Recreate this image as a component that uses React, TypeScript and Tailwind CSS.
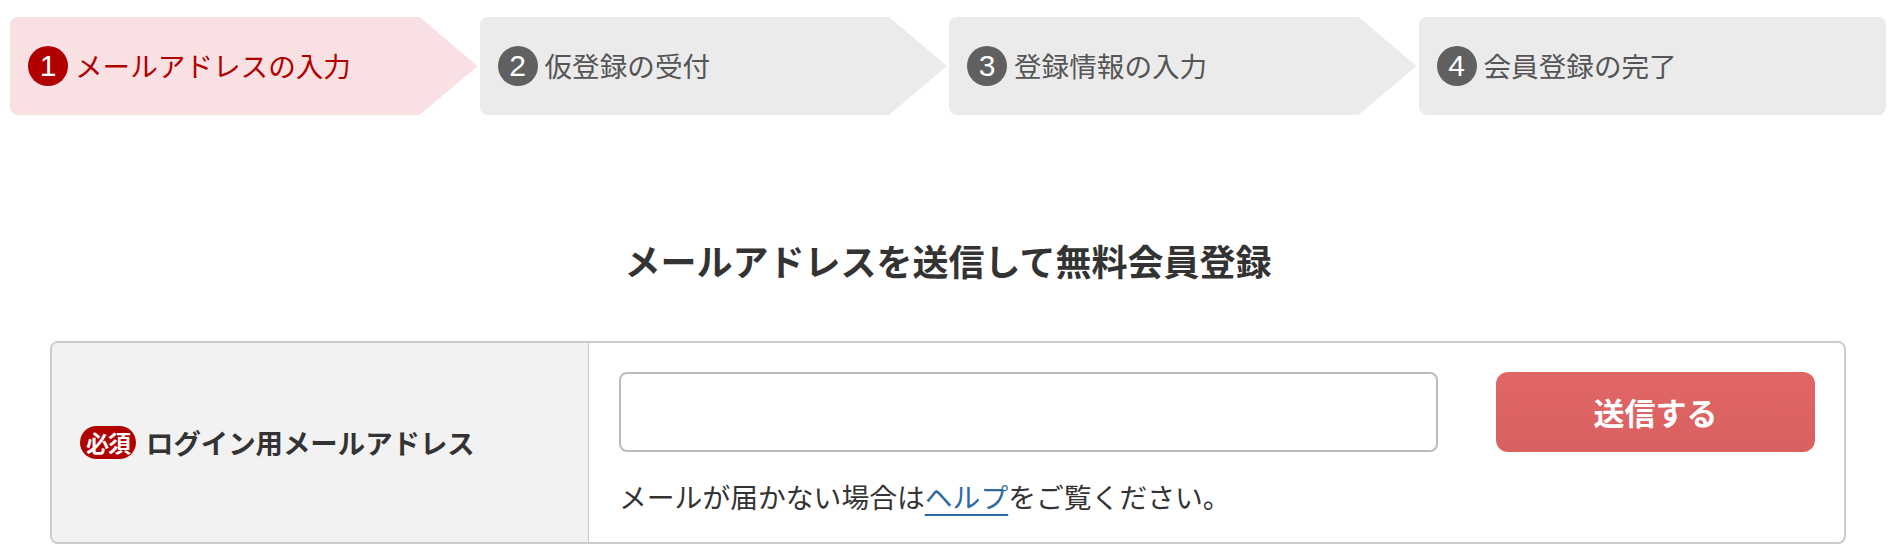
import React from "react";

const font = { fontFamily: '"Noto Sans CJK JP", "Noto Sans", sans-serif' };

function Step({ n, label, active, last }: { n: number; label: string; active?: boolean; last?: boolean }) {
  const bg = active ? "bg-[#f9e0e2]" : "bg-[#ebebeb]";
  const text = active ? "text-[#b00000]" : "text-[#555555]";
  const circle = active ? "bg-[#b00000]" : "bg-[#606060]";
  const shape = last
    ? "rounded-[8px]"
    : "rounded-l-[8px] [clip-path:polygon(0_0,calc(100%_-_58px)_0,100%_50%,calc(100%_-_58px)_100%,0_100%)]";
  return (
    <div className={`flex-1 h-[98px] flex items-center pl-[18px] ${bg} ${shape}`}>
      <span className={`w-[40px] h-[40px] rounded-full ${circle} text-white flex items-center justify-center text-[30px] leading-none mr-[7px]`} style={{ fontFamily: '"Liberation Sans", Arial, sans-serif' }}>
        {n}
      </span>
      <span className={`text-[27.6px] leading-none ${text}`}>{label}</span>
    </div>
  );
}

export default function App() {
  return (
    <div className="w-[1896px] h-[560px] bg-white overflow-hidden" style={font}>
      <div className="flex gap-[2px] pl-[10px] pr-[10px] pt-[17px]">
        <Step n={1} label="メールアドレスの入力" active />
        <Step n={2} label="仮登録の受付" />
        <Step n={3} label="登録情報の入力" />
        <Step n={4} label="会員登録の完了" last />
      </div>

      <h1 className="text-center text-[36px] font-bold text-[#333333] leading-[54px] mt-[118px]">
        メールアドレスを送信して無料会員登録
      </h1>

      <div className="mx-[50px] mt-[54px] border-2 border-[#cccccc] rounded-[8px] flex overflow-hidden">
        <div className="w-[537px] bg-[#f2f2f2] border-r border-[#cccccc] flex items-center pl-[28px]">
          <span className="bg-[#b00000] text-white text-[23px] font-bold leading-none rounded-full w-[56px] h-[33px] flex items-center justify-center tracking-[-1px] mr-[10px]">
            必須
          </span>
          <span className="text-[27.4px] font-bold text-[#333333] leading-none">ログイン用メールアドレス</span>
        </div>
        <div className="flex-1 pt-[29px] pb-[26px] pl-[30px] pr-[29px]">
          <div className="flex gap-[58px]">
            <input className="flex-1 h-[80px] border-2 border-[#bbbbbb] rounded-[8px] bg-white outline-none px-3" />
            <button className="w-[319px] h-[80px] rounded-[12px] bg-gradient-to-b from-[#e16767] to-[#d96060] text-white text-[31px] font-bold">
              送信する
            </button>
          </div>
          <p className="mt-[24px] text-[27.8px] leading-[40px] text-[#333333]">
            メールが届かない場合は
            <a href="#" className="text-[#2f6aa0] underline underline-offset-[6px] decoration-2">ヘルプ</a>
            をご覧ください。
          </p>
        </div>
      </div>
    </div>
  );
}
